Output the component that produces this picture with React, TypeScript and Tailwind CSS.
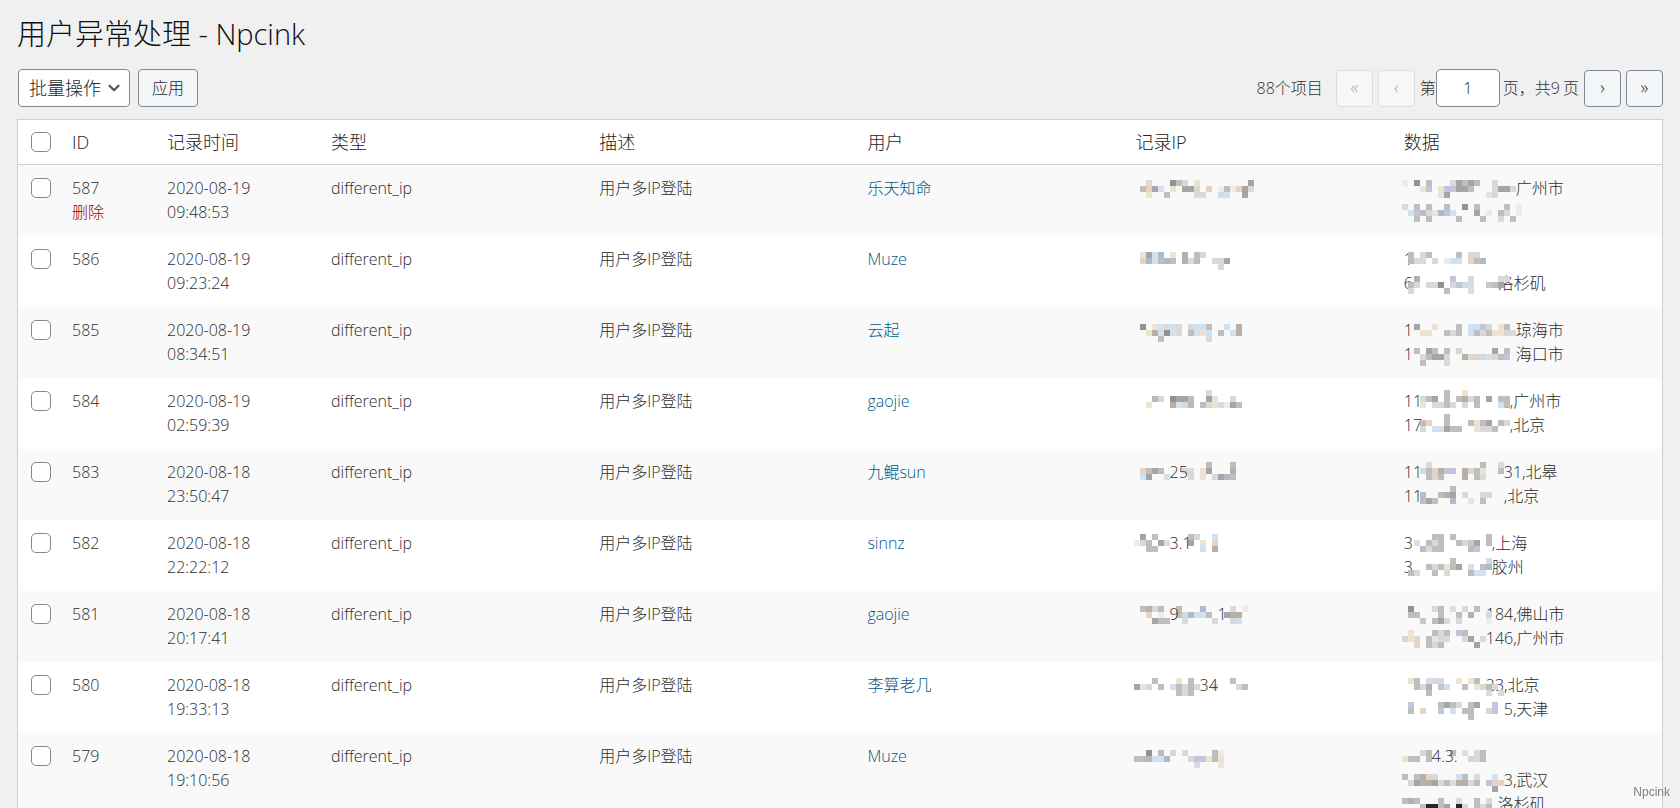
import { ChevronDown } from "lucide-react";

type Line = {
    prefix?: string;
    // short piece of text left readable inside the mask
    inner?: { text: string; col: number }[];
    suffix?: string;
    // column of the mosaic where the suffix starts
    at?: number;
    cells: string[];
};

type Row = {
    id: number;
    date: string;
    time: string;
    user: string;
    ip: Line;
    data: Line[];
};

const CELL = 6;

const shades: Record<string, string> = {
    a: "#ececec",
    b: "#d9d9d9",
    c: "#bebebe",
    d: "#a6a4a4",
    e: "#929292",
    k: "#22262c",
    o: "#e6d3c3",
    p: "#c3c6da",
    s: "#d0e2f1",
    t: "#b8afa6",
    u: "#adbbc8",
    y: "#ece3d1",
};

const rows: Row[] = [
    {
        id: 587, date: "2020-08-19", time: "09:48:53", user: "乐天知命",
        ip: { cells: ["..b...ecb.y........d", ".cods.y.ddb.o.acaodb", "..y..c....bb..bs..d."] },
        data: [
            { suffix: "广州市", at: 19, cells: ["a.e.c...bdcdc..b", "...yp.yppddc...bddb", "......yd......yb"] },
            { cells: ["b.c.c..c..e.c....c.a", ".spcbyups...d.a.cb.a", "..c.c....c...c..b.c"] },
        ],
    },
    {
        id: 586, date: "2020-08-19", time: "09:23:24", user: "Muze",
        ip: { cells: [".ydsu.y.t.co", ".ouscuc.tbc..bbd", "..............b"] },
        data: [
            { prefix: "1", cells: [".c.bc....c.ob", ".cbb.b.ass.ocu"] },
            { prefix: "6", suffix: "洛杉矶", at: 16, cells: ["..t.....p..b....bb", ".cb.bbe.bpbs..pcd", ".b.....c...s"] },
        ],
    },
    {
        id: 585, date: "2020-08-19", time: "08:34:51", user: "云起",
        ip: { cells: [".e.ysbsb.bssc..s.t", "..ytsesb.csys.c.st", "....c.......b"] },
        data: [
            { prefix: "1", suffix: "琼海市", at: 19, cells: ["..d..y...c.sspb.yc", "...yy..cbc.scbcyybb"] },
            { prefix: "1", suffix: "海口市", at: 19, cells: ["..c.dc.c.o.....d.c", "...bcddb..tbobsbcp", "...c...b"] },
        ],
    },
    {
        id: 584, date: "2020-08-19", time: "02:59:39", user: "gaojie",
        ip: { cells: ["............b", "...uo.eddc..dy..b", "..y...tsbu.cbybadc"] },
        data: [
            { prefix: "11", suffix: ",广州市", at: 18, cells: [".......c..y", "...bcd.c.ctbc.d.cc", "...y.bbcb.b.c...sc"] },
            { prefix: "17", suffix: ",北京", at: 18, cells: [".......c", "...co..c...cycd.cb", "...b.ssdcc..ybbc"] },
        ],
    },
    {
        id: 583, date: "2020-08-18", time: "23:50:47", user: "九鲲sun",
        ip: { inner: [{ text: "25", col: 6 }], cells: ["............c...c", ".ocdc...bb.yd...t", ".sd..s...b.y.bduc"] },
        data: [
            { prefix: "11", suffix: "31,北皋", at: 17, cells: ["....b........c..b", "...bcotpp.tbcy..c", "....coc...t.cb"] },
            { prefix: "11", suffix: ",北京", at: 17, cells: ["........c", "...c..ctd.b..ob.", "...cdc..u..y.c"] },
        ],
    },
    {
        id: 582, date: "2020-08-18", time: "22:22:12", user: "sinnz",
        ip: { inner: [{ text: "3.1", col: 6 }], cells: [".d.c.....cb..s", "aoc.ds...d.y.o", "..cc.......s.t"] },
        data: [
            { prefix: "3", suffix: ",上海", at: 15, cells: [".....cc.c.....c", "..s.cbc..cbpd.c", "...cbcc....cp"] },
            { prefix: "3", suffix: "胶州", at: 15, cells: ["........c.....b", "....cbcycd.s.cu", ".cb..c.b...css"] },
        ],
    },
    {
        id: 581, date: "2020-08-18", time: "20:17:41", user: "gaojie",
        ip: { inner: [{ text: "9", col: 6 }, { text: "1", col: 14 }], cells: [".ctbc..c...u....b.a", "..o.a..cbussc..dtt", "...dcc..b....b..bs"] },
        data: [
            { suffix: "184,佛山市", at: 14, cells: [".e...bc.s.b.c", ".cc...c..c.t..b", "...p.cdb.b....a"] },
            { suffix: "146,广州市", at: 14, cells: [".y...cbc.pc...", "oyb.cybb..bd.b", "..o.cbc.....d."] },
        ],
    },
    {
        id: 580, date: "2020-08-18", time: "19:33:13", user: "李算老几",
        ip: { inner: [{ text: "34", col: 11 }], cells: ["...c...y.c......c", "dyb.c.scbcb..s...bc", ".......cbc"] },
        data: [
            { suffix: "23,北京", at: 14, cells: [".yc.sbb..y.yc.", "..cbt.ps..c.ybcb", "....c.........b.b"] },
            { suffix: "5,天津", at: 17, cells: [".p....cdcb.cd..p", ".c.o..p.s.cc..op", "...........c"] },
        ],
    },
    {
        id: 579, date: "2020-08-18", time: "19:10:56", user: "Muze",
        ip: { cells: ["..e.c.o.b....ca", "ccussu...bppycy", "..........b...y"] },
        data: [
            { inner: [{ text: "4.3.", col: 5 }], cells: ["...bc...c.s.bc", "ycc.c......obc"] },
            { suffix: "3,武汉", at: 17, cells: ["c.ctob...sc.b..s", ".bdttdbcsttbc.poo", "...............d"] },
            { suffix: "洛杉矶", at: 16, cells: ["ctc...c..b..c.b", "...ckkcd.kb.cbc"] },
        ],
    },
];

function MaskedLine({ line, shift }: { line: Line; shift: number }) {
    const cols = Math.max(...line.cells.map((r) => r.length));
    const width = (line.at ?? cols) * CELL;
    return (
        <div className="relative flex h-6 whitespace-nowrap">
            {line.prefix && <span className="absolute left-0 top-0">{line.prefix}</span>}
            <svg
                width={width}
                height={line.cells.length * CELL}
                style={{ marginTop: shift }}
                className="relative -ml-0.5 shrink-0 overflow-visible"
                shapeRendering="crispEdges"
                aria-hidden="true"
            >
                {line.cells.flatMap((r, y) =>
                    r.split("").map((c, x) =>
                        shades[c] ? (
                            <rect key={`${x}-${y}`} x={x * CELL} y={y * CELL} width={CELL} height={CELL} fill={shades[c]} />
                        ) : null
                    )
                )}
            </svg>
            {line.inner?.map((t) => (
                <span key={t.col} className="absolute top-0" style={{ left: t.col * CELL - 2 }}>
                    {t.text}
                </span>
            ))}
            {line.suffix && <span>{line.suffix}</span>}
        </div>
    );
}

const pageButton = "flex size-[37px] items-center justify-center rounded border pb-0.5 text-lg leading-none";
const pageOn = "border-[#7e8993] bg-[#f3f5f6] text-[#23282d]";
const pageOff = "border-[#dddddd] bg-[#f7f7f7] text-[#a0a5aa]";
const checkbox = "block size-5 appearance-none rounded-[5px] border border-[#7e8993] bg-white checked:bg-[#0073aa]";

function Toolbar() {
    return (
        <div className="mt-[13px] flex h-[38px] items-center justify-between pl-px">
            <div className="flex items-center gap-2">
                <div className="relative">
                    <select
                        aria-label="批量操作"
                        className="h-[38px] w-28 appearance-none rounded border border-[#7e8993] bg-white pl-2.5 text-lg font-light text-[#23282d]"
                    >
                        <option>批量操作</option>
                        <option>删除</option>
                    </select>
                    <ChevronDown size={18} strokeWidth={3} className="pointer-events-none absolute right-[7px] top-2.5 text-[#555]" />
                </div>
                <button type="button" className="h-[38px] rounded border border-[#7e8993] bg-[#f3f5f6] px-[13px] text-base text-[#23282d]">
                    应用
                </button>
            </div>

            <div className="flex items-center gap-[5px] text-base text-[#333]">
                <span className="mr-2">88个项目</span>
                <button type="button" disabled aria-label="首页" className={`${pageButton} ${pageOff}`}>«</button>
                <button type="button" disabled aria-label="上一页" className={`${pageButton} ${pageOff}`}>‹</button>
                <label className="flex items-center">
                    第
                    <input
                        type="text"
                        defaultValue="1"
                        aria-label="当前页"
                        className="h-[38px] w-16 rounded-[5px] border border-[#7e8993] bg-white text-center text-base text-[#23282d]"
                    />
                </label>
                <span className="-ml-0.5">页，共<span className="mr-[3px]">9</span>页</span>
                <button type="button" aria-label="下一页" className={`${pageButton} ${pageOn}`}>›</button>
                <button type="button" aria-label="尾页" className={`${pageButton} ${pageOn}`}>»</button>
            </div>
        </div>
    );
}

export default function App() {
    return (
        <div className="h-screen overflow-hidden bg-[#f0f0f1] px-[17px] pt-3 font-['Open_Sans','Noto_Sans_CJK_SC',sans-serif] text-base font-light text-[#2c2c2c]">
            <h1 className="text-[29px] leading-[44px] text-[#0c0f12]">用户异常处理 - Npcink</h1>

            <Toolbar />

            <div className="mt-3 border border-[#ccd0d4] bg-white">
                <table className="w-full table-fixed text-left">
                    <thead>
                        <tr className="h-11 border-b border-[#ccd0d4] text-lg leading-6 text-[#1d2226] [&>th]:px-2.5 [&>th]:font-light">
                            <th className="w-11">
                                <input type="checkbox" aria-label="全选" className={`${checkbox} ml-[3px]`} />
                            </th>
                            <th className="w-[95px]">ID</th>
                            <th className="w-[164px]">记录时间</th>
                            <th>类型</th>
                            <th>描述</th>
                            <th>用户</th>
                            <th>记录IP</th>
                            <th>数据</th>
                        </tr>
                    </thead>
                    <tbody>
                        {rows.map((row, i) => {
                            // masks of every row share one 6px grid while rows are 71px apart
                            const shift = ((i + 3) % CELL) + 1;
                            return (
                                <tr
                                    key={row.id}
                                    className="align-top leading-6 odd:bg-[#f9f9f9] [&>td]:px-2.5 [&>td]:pb-3 [&>td]:pt-[11px]"
                                >
                                    <td>
                                        <input type="checkbox" aria-label={`选择 ${row.id}`} className={`${checkbox} ml-[3px] mt-0.5`} />
                                    </td>
                                    <td>
                                        {row.id}
                                        {i === 0 && (
                                            <a href="#delete" className="block text-[#990000]">删除</a>
                                        )}
                                    </td>
                                    <td>
                                        {row.date}
                                        <br />
                                        {row.time}
                                    </td>
                                    <td>different_ip</td>
                                    <td>用户多IP登陆</td>
                                    <td>
                                        <a href="#user" className="text-[#005a87]">{row.user}</a>
                                    </td>
                                    <td>
                                        <MaskedLine line={row.ip} shift={shift} />
                                    </td>
                                    <td>
                                        {row.data.map((line, n) => (
                                            <MaskedLine key={n} line={line} shift={shift} />
                                        ))}
                                    </td>
                                </tr>
                            );
                        })}
                    </tbody>
                </table>
            </div>

            <span className="fixed bottom-2 right-2.5 font-['Liberation_Sans',sans-serif] text-xs font-normal leading-4 text-[#808080]">Npcink</span>
        </div>
    );
}
